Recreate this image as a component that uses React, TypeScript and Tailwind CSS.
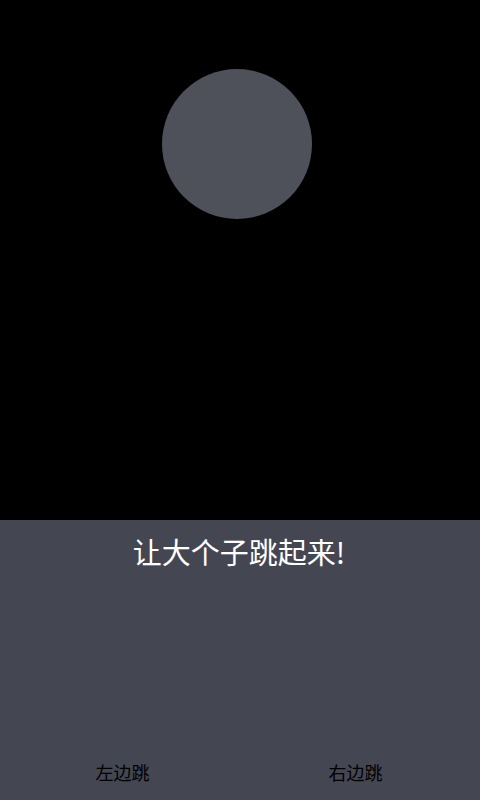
export default function App() {
  const font = "font-['Noto_Sans_CJK_SC','Noto_Sans',sans-serif]";

  return (
    <div className={`w-[480px] h-[800px] flex flex-col bg-black ${font}`}>
      {/* Stage */}
      <div className="h-[520px] flex justify-center pt-[69px] pr-[6px]">
        <div className="w-[150px] h-[150px] rounded-full bg-[#4e515a]" />
      </div>

      {/* Controls */}
      <div className="flex-1 flex flex-col bg-[#444652]">
        <h1 className="text-center text-white text-[29px] leading-none pt-[17px] pr-[2px]">
          让大个子跳起来!
        </h1>
        <div className="mt-auto flex pb-[13px]">
          <button className="flex-1 text-[18px] leading-none text-black pl-[6px] py-[6px]">
            左边跳
          </button>
          <button className="flex-1 text-[18px] leading-none text-black pr-[8px] py-[6px]">
            右边跳
          </button>
        </div>
      </div>
    </div>
  );
}
